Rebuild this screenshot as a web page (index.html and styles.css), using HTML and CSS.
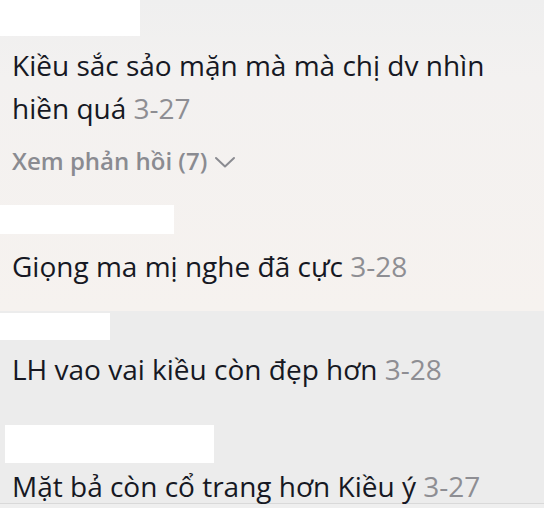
FILE: index.html
```html
<!DOCTYPE html>
<html lang="vi">
<head>
<meta charset="utf-8">
<link rel="stylesheet" href="styles.css">
</head>
<body>
<div class="sheet">
  <section class="upper">
    <div class="mask mask-a"></div>
    <p class="comment first">Kiều sắc sảo mặn mà mà chị dv nhìn<br>hiền quá <span class="date">3-27</span></p>
    <div class="replies">Xem phản hồi (7)
      <svg class="chev" width="22" height="12" viewBox="0 0 22 12"><path d="M2 2 L11 10.5 L20 2" fill="none" stroke="#8a8b91" stroke-width="2" stroke-linecap="round" stroke-linejoin="round"/></svg>
    </div>
    <div class="mask mask-b"></div>
    <p class="comment second">Giọng ma mị nghe đã cực <span class="date">3-28</span></p>
  </section>
  <section class="lower">
    <div class="mask mask-c"></div>
    <p class="comment third">LH vao vai kiều còn đẹp hơn <span class="date">3-28</span></p>
    <div class="mask mask-d"></div>
    <p class="comment fourth">Mặt bả còn cổ trang hơn Kiều ý <span class="date">3-27</span></p>
  </section>
</div>
</body>
</html>
```
FILE: styles.css
```css
* { box-sizing: border-box; }
html, body { margin: 0; padding: 0; }
body {
  width: 544px;
  height: 508px;
  overflow: hidden;
  font-family: "Open Sans", "Noto Sans", sans-serif;
  background: #efefef;
}
.sheet { display: flex; flex-direction: column; }
.upper {
  height: 311px;
  background: linear-gradient(180deg, #efefef 0%, #f3f1f0 25%, #f6f2ef 100%);
}
.lower {
  height: 193px;
  background: #ececec;
  border-bottom: 1px solid #d9d9d9;
  padding-top: 2px;
}
.mask { background: #ffffff; }
.mask-a { width: 140px; height: 36px; }
.mask-b { width: 174px; height: 29px; margin-top: 31px; }
.mask-c { width: 110px; height: 27px; }
.mask-d { width: 209px; height: 38px; margin-left: 5px; margin-top: 34px; }
.comment {
  margin: 0;
  padding: 0 12px;
  font-size: 28px;
  line-height: 43px;
  color: #161823;
  white-space: nowrap;
}
.date { color: #8e8e93; }
.first { margin-top: 8px; }
.replies {
  margin: 18px 0 0 12px;
  height: 26px;
  font-size: 24px;
  line-height: 26px;
  font-weight: 600;
  color: #8a8b91;
  display: flex;
  align-items: center;
  gap: 7px;
}
.chev { margin-top: 2px; }
.second { margin-top: 11px; }
.third { margin-top: 8px; }
.fourth { margin-top: 2px; }
```
